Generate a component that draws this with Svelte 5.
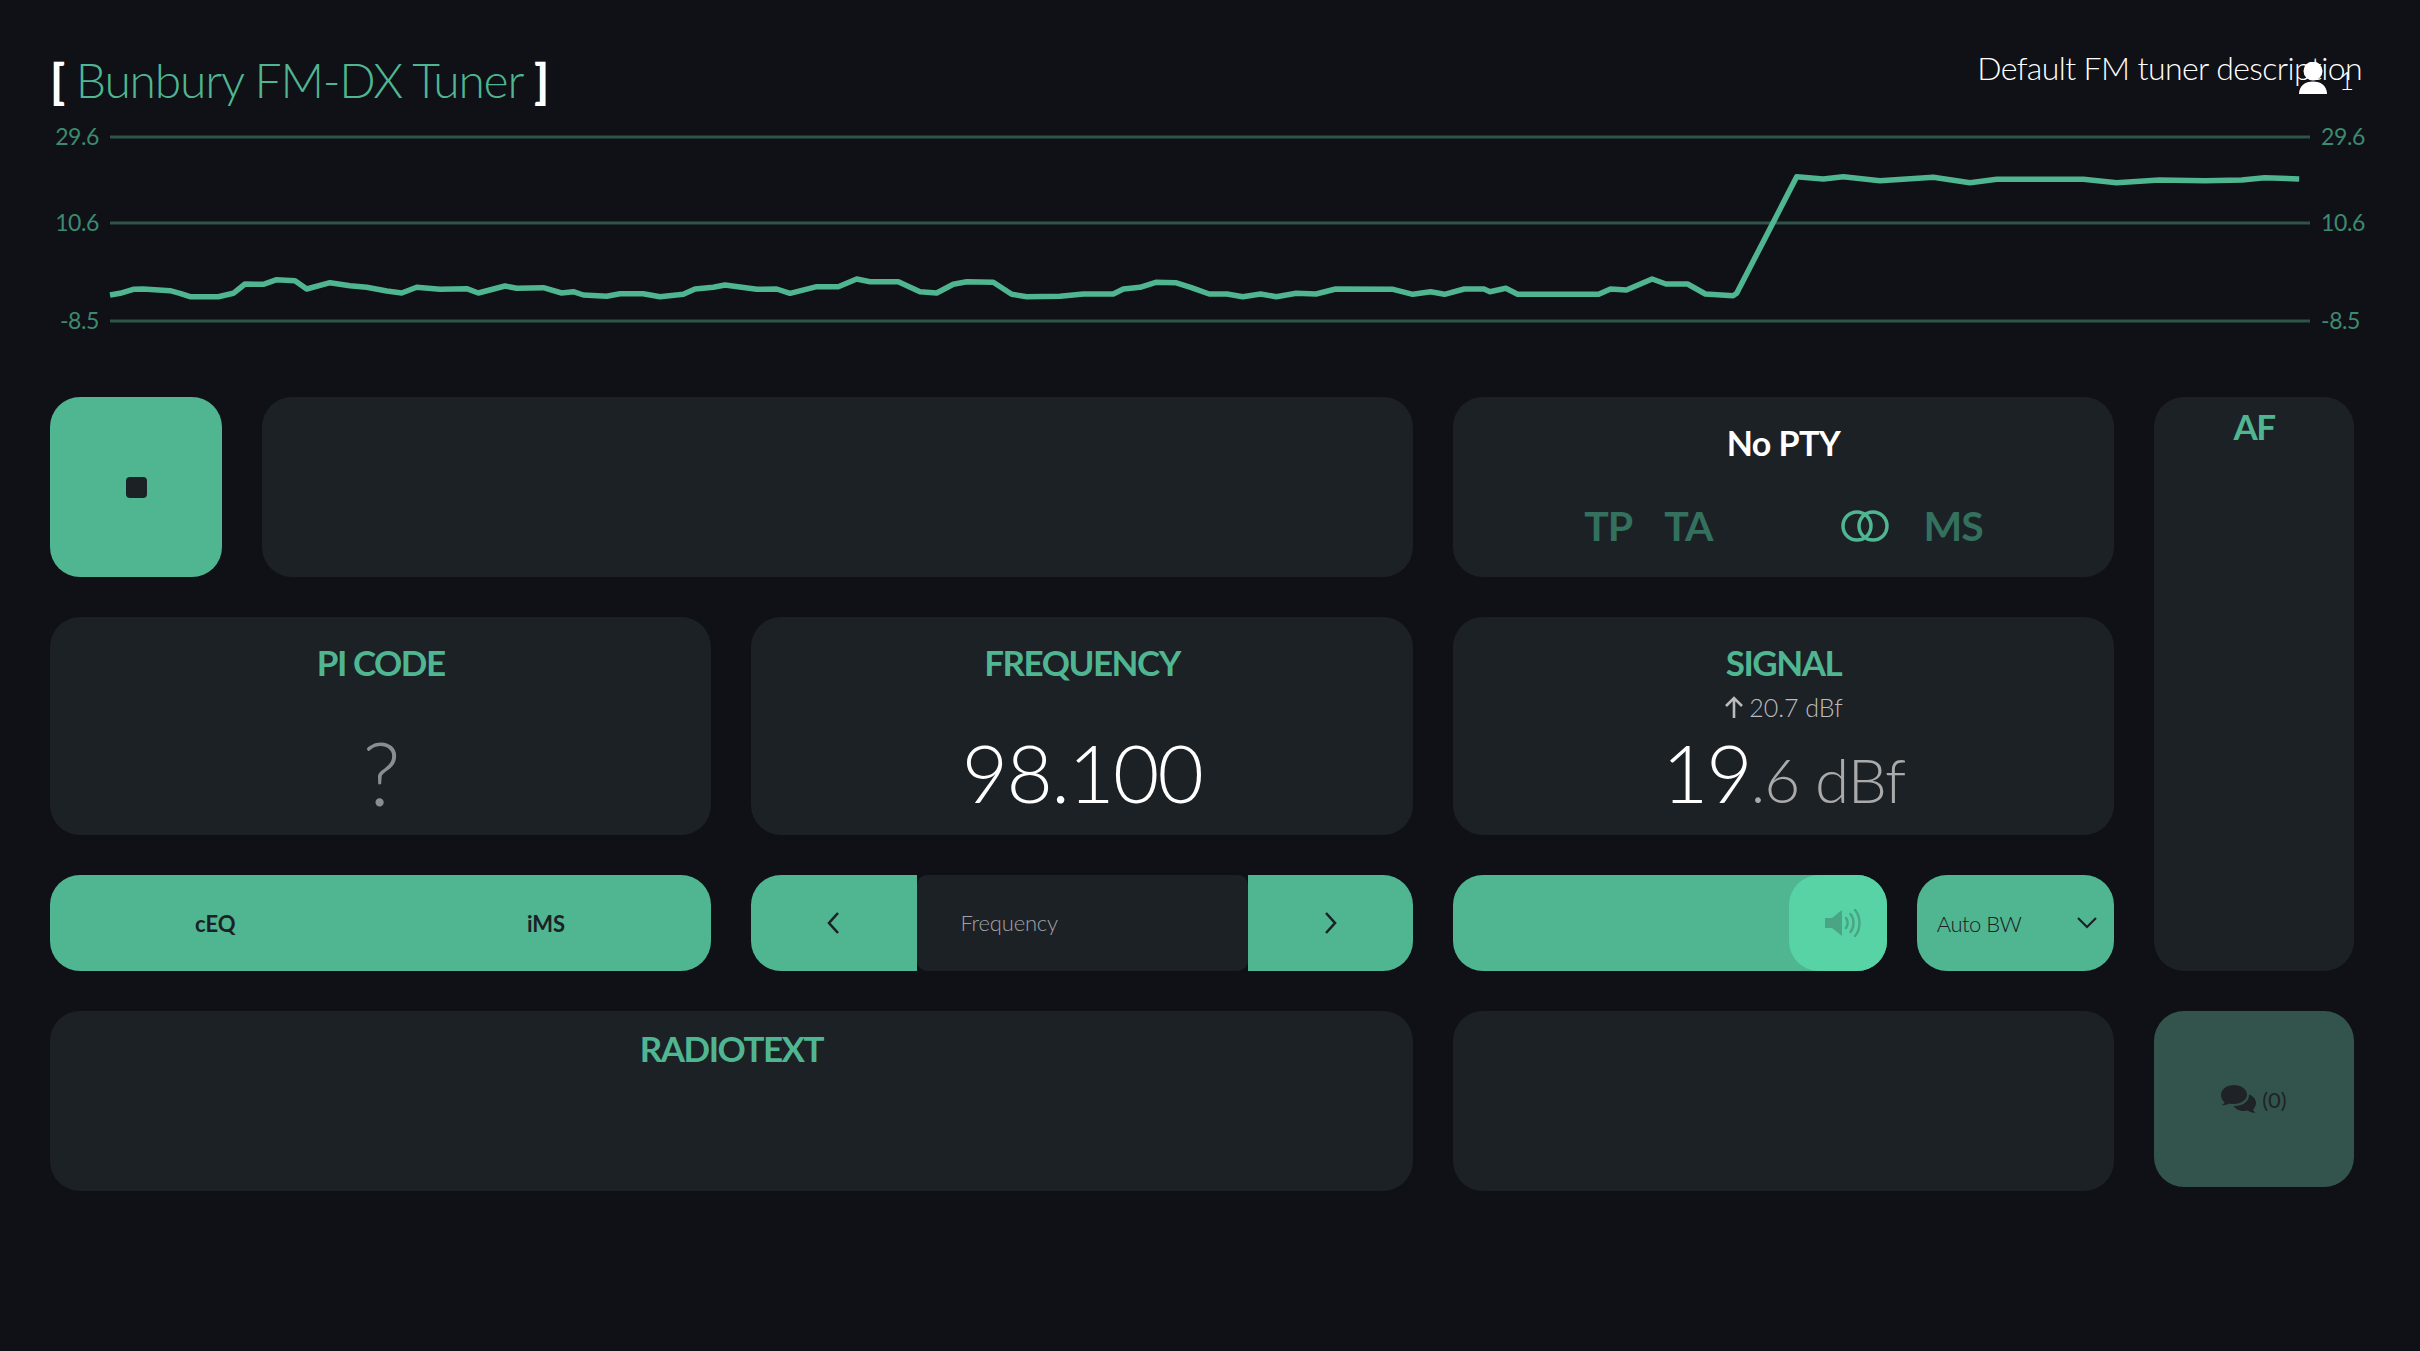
<script>
  // trace samples read off the reference: [x origin, x scale, y origin, y scale, [px, py...]]
  const runs = [
    [100, 3, 265, 3, [30,90, 60,85, 100,73, 130,72, 210,77, 240,85, 270,95, 355,95, 400,85, 435,57, 490,58, 530,44, 585,47, 620,72, 690,53, 750,62, 800,67, 860,78, 905,84, 950,67, 1020,73, 1100,71, 1135,84, 1215,63, 1250,70, 1330,68, 1385,84, 1420,80, 1450,90, 1520,94]],
    [620, 3, 265, 3, [0,86, 70,86, 120,95, 190,88, 225,72, 280,67, 315,60, 410,73, 470,72, 510,85, 590,65, 655,65, 710,42, 750,50, 835,50, 900,80, 950,84, 1000,58, 1040,50, 1120,52, 1175,88, 1220,95, 1320,94, 1390,87, 1480,87, 1510,72]],
    [1140, 2.529, 265, 3, [0,67, 40,52, 90,53, 130,68, 175,87, 220,87, 260,95, 305,87, 345,95, 395,85, 445,87, 495,72, 640,73, 690,88, 735,80, 770,88, 820,72, 870,72, 885,80, 925,70, 955,88, 1160,88, 1190,72, 1230,75, 1295,42, 1330,57, 1385,57, 1430,87, 1500,92]],
    [1650, 3, 150, 3, [260,430, 440,80, 520,87, 580,80, 690,92, 850,82, 960,98, 1040,88, 1300,88, 1400,98]],
    [1700, 2.178, 30, 3, [1000,450, 1100,452, 1180,450, 1230,443, 1305,447]]
  ];

  const trace = runs
    .flatMap(([x0, sx, y0, sy, p]) => {
      const out = [];
      for (let i = 0; i < p.length; i += 2) {
        out.push(`${(x0 + p[i] / sx).toFixed(1)},${(y0 + p[i + 1] / sy).toFixed(1)}`);
      }
      return out;
    })
    .join(' ');

  const scale = [
    { label: '29.6', y: 137 },
    { label: '10.6', y: 223 },
    { label: '-8.5', y: 321 }
  ];
</script>

<div class="page">
  <header class="top">
    <h1 class="title"><span class="bracket">[</span> Bunbury FM-DX Tuner <span class="bracket">]</span></h1>
    <div class="desc">Default FM tuner description</div>
    <div class="users">
      <svg width="28" height="32" viewBox="0 0 28 32" fill="#fff">
        <circle cx="14" cy="9" r="9.5" />
        <path d="M0 32C0 24 6 19.5 14 19.5S28 24 28 32z" />
      </svg>
      <span class="count">1</span>
    </div>
  </header>

  <svg class="chart" viewBox="0 115 2420 282" width="2420" height="282">
    {#each scale as s}
      <line x1="110" x2="2310" y1={s.y} y2={s.y} stroke="#2f5549" stroke-width="3" />
      <text x="99" y={s.y + 8} text-anchor="end">{s.label}</text>
      <text x="2321" y={s.y + 8}>{s.label}</text>
    {/each}
    <polyline points={trace} fill="none" stroke="#4fb691" stroke-width="5.5" stroke-linejoin="round" />
  </svg>

  <main class="grid">
    <div class="row-one">
      <button class="btn play" aria-label="Stop"><span class="stop"></span></button>
      <div class="card"></div>
    </div>

    <div class="card pty">
      <div class="pty-name">No PTY</div>
      <div class="flags">
        <span>TP</span>
        <span class="ta">TA</span>
        <svg class="stereo" width="48" height="32" viewBox="0 0 48 32" fill="none" stroke="#4fb691" stroke-width="3.5">
          <circle cx="16" cy="16" r="14" />
          <circle cx="32" cy="16" r="14" />
        </svg>
        <span>MS</span>
      </div>
    </div>

    <div class="card af"><h2>AF</h2></div>

    <div class="card panel">
      <h2>PI CODE</h2>
      <div class="big pi">?</div>
    </div>

    <div class="card panel">
      <h2>FREQUENCY</h2>
      <div class="big">98.100</div>
    </div>

    <div class="card panel signal">
      <h2>SIGNAL</h2>
      <div class="peak">
        <svg width="20" height="22" viewBox="0 0 20 22" fill="none" stroke="#bbb" stroke-width="2.6">
          <path d="M10 22V2M2 10l8-8 8 8" />
        </svg>
        20.7 dBf
      </div>
      <div class="value">19<span class="dim">.6 dBf</span></div>
    </div>

    <div class="btn pair">
      <span>cEQ</span>
      <span>iMS</span>
    </div>

    <div class="tune">
      <button class="btn step" aria-label="Down">
        <svg width="14" height="24" viewBox="0 0 14 24" fill="none" stroke="#1c2126" stroke-width="2.6">
          <path d="M12 2L3 12l9 10" />
        </svg>
      </button>
      <div class="freq-input">Frequency</div>
      <button class="btn step" aria-label="Up">
        <svg width="14" height="24" viewBox="0 0 14 24" fill="none" stroke="#1c2126" stroke-width="2.6">
          <path d="M2 2l9 10L2 22" />
        </svg>
      </button>
    </div>

    <div class="controls">
      <div class="btn volume">
        <div class="thumb">
          <svg width="36" height="28" viewBox="0 0 36 28" fill="none" stroke="#4aa584" stroke-width="2.4" stroke-linecap="round">
            <path d="M0 9h7l10-8v26l-10-8H0z" fill="#4aa584" stroke="none" />
            <path d="M21 9c2 3 2 7 0 10M25.500 5c4 5 4 13 0 18M30 1c6 7 6 19 0 26" />
          </svg>
        </div>
      </div>
      <div class="btn bw">
        <span>Auto BW</span>
        <svg width="20" height="12" viewBox="0 0 20 12" fill="none" stroke="#1c2126" stroke-width="2.2">
          <path d="M1 1l9 9 9-9" />
        </svg>
      </div>
    </div>

    <div class="card radiotext"><h2>RADIOTEXT</h2></div>

    <div class="card"></div>

    <button class="chat">
      <svg width="35" height="28" viewBox="0 0 35 28" fill="#1f2328">
        <path d="M13 0C6 0 0 4 0 10c0 3 1.500 5.500 3.500 7.500C3 19 1.500 19.800 0 20c3 .5 6-.3 8-1.500 1.500.4 3.200.6 5 .6 7 0 13-4 13-9.500S20 0 13 0z" />
        <path d="M28 9.500c.5 6-5.500 11.500-14 11.500-.5 0-1 0-1.500-.1C14.500 24 18.500 26 23 26c1.300 0 2.500-.2 3.600-.5 2 1.500 5 2.500 8.400 2-1.500-.4-2.600-1.500-3-3 1.800-1.700 3-3.800 3-6.500 0-4-3-7.300-7-8.500z" />
      </svg>
      <span>(0)</span>
    </button>
  </main>
</div>

<style>
  :global(body) {
    margin: 0;
    background: #0f1116;
  }

  .page {
    width: 2420px;
    height: 1351px;
    overflow: hidden;
    font-family: 'Lato', 'Open Sans', sans-serif;
    color: #fff;
  }

  .top {
    position: relative;
    height: 115px;
    padding: 0 58px 0 50px;
    box-sizing: border-box;
    display: flex;
    justify-content: space-between;
  }

  .title {
    margin: 50px 0 0;
    font-size: 48px;
    font-weight: 300;
    line-height: 60px;
    letter-spacing: -1.2px;
    color: #4fb691;
  }

  .bracket {
    color: #fff;
    font-weight: 900;
  }

  .desc {
    margin-top: 48px;
    font-size: 32px;
    font-weight: 300;
    line-height: 40px;
    letter-spacing: -0.6px;
  }

  .users {
    position: absolute;
    left: 2299px;
    top: 62px;
    display: flex;
    gap: 12px;
  }

  .count {
    font-size: 26px;
    font-weight: 300;
    line-height: 36px;
  }

  .chart {
    display: block;
  }

  .chart text {
    font-size: 23px;
    letter-spacing: -0.4px;
    fill: #3d8a70;
  }

  .grid {
    margin-left: 50px;
    display: grid;
    grid-template-columns: 661.4px 661.4px 661.4px 199.6px;
    grid-template-rows: 180px 218px 96px 180px;
    gap: 40px;
  }

  .card {
    background: #1c2126;
    border-radius: 30px;
  }

  .btn {
    background: #4fb691;
    border: 0;
    border-radius: 30px;
    padding: 0;
    color: #1c2126;
    font-family: inherit;
  }

  h2 {
    margin: -1px 0 0;
    font-size: 35px;
    font-weight: 700;
    line-height: 42px;
    letter-spacing: -1.5px;
    color: #4fb691;
    text-align: center;
  }

  .row-one {
    grid-column: span 2;
    display: grid;
    grid-template-columns: 172px 1fr;
    gap: 40px;
  }

  .play {
    display: flex;
    align-items: center;
    justify-content: center;
  }

  .stop {
    width: 21px;
    height: 21px;
    background: #1c2126;
    border-radius: 4px;
  }

  .pty {
    text-align: center;
  }

  .pty-name {
    margin-top: 26px;
    font-size: 34px;
    font-weight: 700;
    line-height: 40px;
    letter-spacing: -0.6px;
  }

  .flags {
    margin-top: 39px;
    display: flex;
    justify-content: center;
    align-items: center;
    font-size: 41px;
    font-weight: 700;
    line-height: 48px;
    letter-spacing: -1px;
    color: #33705e;
  }

  .ta {
    margin-left: 32px;
  }

  .stereo {
    margin: 0 34px 0 129px;
  }

  .af {
    grid-row: span 3;
    padding-top: 9px;
  }

  .panel {
    padding-top: 25px;
    box-sizing: border-box;
    text-align: center;
  }

  .big {
    margin-top: 44px;
    font-size: 80px;
    font-weight: 300;
    line-height: 90px;
    letter-spacing: -1.7px;
  }

  .pi {
    font-size: 88px;
    color: #8b8e90;
  }

  .peak {
    margin-top: 9px;
    display: flex;
    justify-content: center;
    align-items: center;
    gap: 5px;
    font-size: 25px;
    font-weight: 300;
    line-height: 30px;
    color: #bbb;
  }

  .value {
    margin-top: 10px;
    font-size: 80px;
    font-weight: 300;
    line-height: 80px;
    letter-spacing: -2px;
  }

  .dim {
    font-size: 62px;
    color: #aaa;
    letter-spacing: -1px;
  }

  .pair {
    display: grid;
    grid-template-columns: 1fr 1fr;
    align-items: center;
    text-align: center;
    font-size: 22px;
    font-weight: 700;
  }

  .tune {
    display: grid;
    grid-template-columns: 166px 1fr 165px;
  }

  .step {
    display: flex;
    align-items: center;
    justify-content: center;
  }

  .step:first-child {
    border-radius: 30px 0 0 30px;
    padding-right: 2px;
  }

  .step:last-child {
    border-radius: 0 30px 30px 0;
    padding-left: 2px;
  }

  .freq-input {
    background: #1c2126;
    border-radius: 10px;
    display: flex;
    align-items: center;
    padding: 0 0 2px 43px;
    font-size: 22px;
    font-weight: 300;
    letter-spacing: -0.2px;
    color: #a0a2a4;
  }

  .controls {
    display: grid;
    grid-template-columns: 434px 1fr;
    gap: 30px;
  }

  .volume {
    display: flex;
    justify-content: flex-end;
  }

  .thumb {
    width: 98px;
    background: #58d3a6;
    border-radius: 30px;
    display: flex;
    align-items: center;
    justify-content: center;
    padding-left: 10px;
    box-sizing: border-box;
  }

  .bw {
    display: flex;
    align-items: center;
    justify-content: space-between;
    padding: 0 17px 0 20px;
    font-size: 22px;
    font-weight: 300;
    letter-spacing: -0.5px;
  }

  .radiotext {
    grid-column: span 2;
    padding-top: 17px;
  }

  .chat {
    height: 176px;
    background: #33544c;
    border: 0;
    border-radius: 30px;
    display: flex;
    align-items: center;
    justify-content: center;
    gap: 6px;
    color: #1f2328;
    font-family: inherit;
    font-size: 22px;
    font-weight: 400;
  }
</style>
